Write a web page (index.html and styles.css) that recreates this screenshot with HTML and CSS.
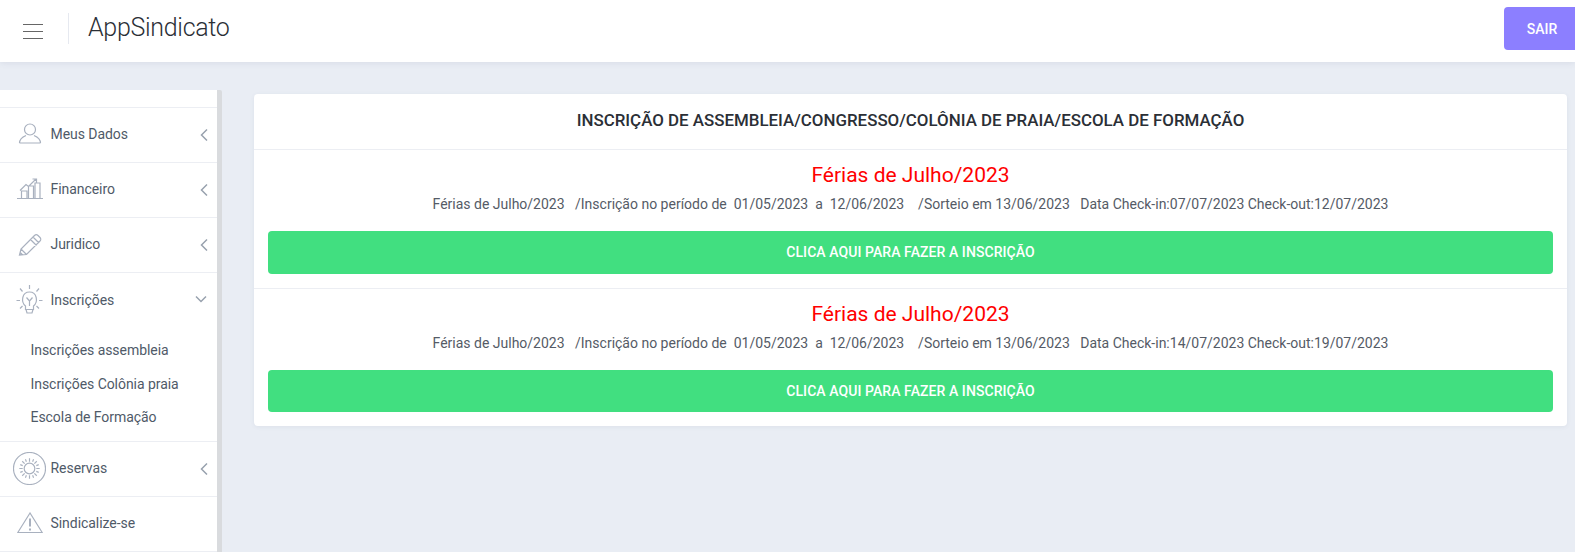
FILE: index.html
```html
<!DOCTYPE html>
<html lang="pt-BR">
<head>
<meta charset="utf-8">
<title>AppSindicato</title>
<link rel="stylesheet" href="styles.css">
</head>
<body>
<header class="topbar">
  <button class="burger" aria-label="Menu"><span></span><span></span><span></span></button>
  <div class="brand">AppSindicato</div>
  <a class="logout">SAIR</a>
</header>
<div class="layout">
  <aside class="sidebar">
    <ul class="menu">
      <li class="item">
        <svg class="ico" viewBox="0 0 26 24"><circle cx="13" cy="6.500" r="5.500"/><path d="M2.500 20c0-4 3-6 6.500-7.500M23.500 20c0-4-3-6-6.500-7.500M2.500 20h21"/></svg>
        <span class="label">Meus Dados</span>
        <svg class="chev" viewBox="0 0 8 12"><path d="M7 .5 1.500 6 7 11.500"/></svg>
      </li>
      <li class="item">
        <svg class="ico" viewBox="0 0 26 24"><path d="M0 20.500h26M4.500 20.500v-7.500h5.500v7.500M11.500 20.500V8h5v12.500M18 20.500V5h5v15.500M3 12.500 9 6.500l2.500 2 7.500-7.500M15.500 1H19.500V5"/></svg>
        <span class="label">Financeiro</span>
        <svg class="chev" viewBox="0 0 8 12"><path d="M7 .5 1.500 6 7 11.500"/></svg>
      </li>
      <li class="item">
        <svg class="ico" viewBox="0 0 26 24"><path d="M2.500 22 4 16 17.500 2.500c1-1 2.500-1 3.500 0l2 2c1 1 1 2.500 0 3.500L9.500 21.500zM4 16l5.500 5.500M16 4l6 6M13.500 6.500l6 6M2.500 22l2.500-.7-1.800-1.800z"/></svg>
        <span class="label">Juridico</span>
        <svg class="chev" viewBox="0 0 8 12"><path d="M7 .5 1.500 6 7 11.500"/></svg>
      </li>
      <li class="item item-open">
        <svg class="ico ico-bulb" viewBox="0 0 28 30"><path d="M14 0v4M4.500 3.500 7 6.500M23.500 3.500 21 6.500M1 15.500h3.500M23.500 15.500H27M4.500 23.500 7 21M23.500 23.500 21 21M10 21c-5-4-3.500-14 4-14s9 10 4 14v3.500h-8zM11 12.500l3 3.500 3-3.500M14 16v5M10.500 24.500l1 3.500h5l1-3.500"/></svg>
        <span class="label">Inscrições</span>
        <svg class="chev-down" viewBox="0 0 12 8"><path d="M1 1.500 6 6.500l5-5"/></svg>
      </li>
      <li class="submenu">
        <a>Inscrições assembleia</a>
        <a>Inscrições Colônia praia</a>
        <a>Escola de Formação</a>
      </li>
      <li class="item">
        <svg class="ico ico-sun" viewBox="0 0 34 34"><circle cx="17" cy="17" r="16.500"/><circle cx="17" cy="17" r="5.500"/><path d="M17 6.500v3.500M17 24v3.500M6.500 17H10M24 17h3.500M9.500 9.500 12 12M24.500 9.500 22 12M9.500 24.500 12 22M24.500 24.500 22 22M12.800 7.500l1 2.500M21.200 7.500l-1 2.500M12.800 26.500l1-2.500M21.200 26.500l-1-2.500M7.500 13l2.500 1M26.500 13 24 14M7.500 21l2.500-1M26.500 21 24 20"/></svg>
        <span class="label">Reservas</span>
        <svg class="chev" viewBox="0 0 8 12"><path d="M7 .5 1.500 6 7 11.500"/></svg>
      </li>
      <li class="item">
        <svg class="ico" viewBox="0 0 26 24"><path d="M13 1 .8 20.500h24.400z"/><path class="mark" d="M13 6.500v8M13 16.500v2"/></svg>
        <span class="label">Sindicalize-se</span>
      </li>
    </ul>
  </aside>
  <main class="main">
    <section class="card">
      <h1 class="card-title">INSCRIÇÃO DE ASSEMBLEIA/CONGRESSO/COLÔNIA DE PRAIA/ESCOLA DE FORMAÇÃO</h1>
      <article class="event">
        <h2 class="event-title">Férias de Julho/2023</h2>
        <p class="event-text">Férias de Julho/2023 &nbsp; /Inscrição no período de &nbsp;01/05/2023 &nbsp;a &nbsp;12/06/2023 &nbsp; &nbsp;/Sorteio em 13/06/2023 &nbsp; Data Check-in:07/07/2023 Check-out:12/07/2023</p>
        <a class="cta">CLICA AQUI PARA FAZER A INSCRIÇÃO</a>
      </article>
      <article class="event">
        <h2 class="event-title">Férias de Julho/2023</h2>
        <p class="event-text">Férias de Julho/2023 &nbsp; /Inscrição no período de &nbsp;01/05/2023 &nbsp;a &nbsp;12/06/2023 &nbsp; &nbsp;/Sorteio em 13/06/2023 &nbsp; Data Check-in:14/07/2023 Check-out:19/07/2023</p>
        <a class="cta">CLICA AQUI PARA FAZER A INSCRIÇÃO</a>
      </article>
    </section>
  </main>
</div>
</body>
</html>
```
FILE: styles.css
```css
* { box-sizing: border-box; }
html, body { height: 100%; }
body {
  margin: 0;
  height: 552px;
  overflow: hidden;
  background: #e9edf4;
  font-family: Roboto, sans-serif;
  color: #4f5a68;
  display: flex;
  flex-direction: column;
}
.topbar {
  height: 62px;
  flex: none;
  background: #fff;
  display: flex;
  align-items: center;
  box-shadow: 0 1px 6px rgba(90, 100, 130, .12);
}
.burger {
  width: 20px;
  height: 15px;
  margin-left: 23px;
  padding: 0;
  border: 0;
  background: none;
  display: flex;
  flex-direction: column;
  justify-content: space-between;
}
.burger span { display: block; height: 1px; background: #666; }
.brand {
  margin-left: 25px;
  margin-top: -5px;
  padding-left: 19px;
  height: 31px;
  line-height: 29px;
  border-left: 1px solid #e6e9f0;
  font-size: 25px;
  font-weight: 300;
  color: #2b2f36;
  letter-spacing: -.3px;
}
.logout {
  margin-left: auto;
  width: 71px;
  height: 43px;
  margin-top: -5px;
  padding-left: 5px;
  background: #8c7fff;
  border-radius: 4px 0 0 4px;
  color: #fff;
  font-size: 14px;
  font-weight: 500;
  display: flex;
  align-items: center;
  justify-content: center;
}
.layout { flex: 1; display: flex; min-height: 0; }
.sidebar {
  width: 222px;
  flex: none;
  margin-top: 28px;
  background: #fff;
  border-right: 5px solid #d9dbde;
  border-top-right-radius: 2px;
  padding-top: 17px;
}
.menu { list-style: none; margin: 0; padding: 0; border-top: 1px solid #eceef3; }
.item {
  height: 55px;
  display: flex;
  align-items: center;
  position: relative;
  border-bottom: 1px solid #eceef3;
  padding: 0 0 2px 50.500px;
  font-size: 14px;
  letter-spacing: -.05px;
}
.item-open { border-bottom: 0; }
.label { color: #4f5a68; }
.ico {
  position: absolute;
  left: 17px;
  top: 15px;
  width: 26px;
  height: 24px;
  fill: none;
  stroke: #a9b1bf;
  stroke-width: 1.200;
}
.mark { stroke-width: 2; }
.ico-bulb { left: 15px; top: 12px; width: 29px; height: 30px; }
.ico-sun { left: 13px; top: 10px; width: 33px; height: 33px; }
.chev, .chev-down {
  position: absolute;
  fill: none;
  stroke: #98a1ae;
  stroke-width: 1.500;
}
.chev { left: 199.500px; top: 21px; width: 8px; height: 12px; }
.chev-down { left: 195px; top: 22px; width: 12px; height: 8px; }
.submenu {
  padding: 6px 0 6px 30.500px;
  border-bottom: 1px solid #eceef3;
  display: flex;
  flex-direction: column;
}
.submenu a { height: 33.500px; line-height: 33px; font-size: 14px; letter-spacing: -.05px; color: #4f5a68; }
.main { flex: 1; min-width: 0; padding: 32px 8px 0 32px; }
.card { background: #fff; border-radius: 4px; box-shadow: 0 1px 4px rgba(90, 100, 130, .08); }
.card-title {
  margin: 0;
  height: 56px;
  line-height: 52px;
  text-align: center;
  font-size: 16.900px;
  font-weight: 500;
  color: #2b2f36;
  border-bottom: 1px solid #eceef3;
}
.event { padding: 11px 14px 14px; text-align: center; border-bottom: 1px solid #eceef3; }
.event:last-child { border-bottom: 0; }
.event-title { margin: 0; font-size: 21px; line-height: 28px; font-weight: 400; color: #f00; }
.event-text { margin: 5px 0 17px; font-size: 14px; line-height: 20px; color: #555b66; }
.cta {
  display: flex;
  height: 42.600px;
  align-items: center;
  justify-content: center;
  background: #41df80;
  border-radius: 4px;
  color: #fff;
  font-size: 14px;
  font-weight: 500;
  letter-spacing: .07px;
}
```
